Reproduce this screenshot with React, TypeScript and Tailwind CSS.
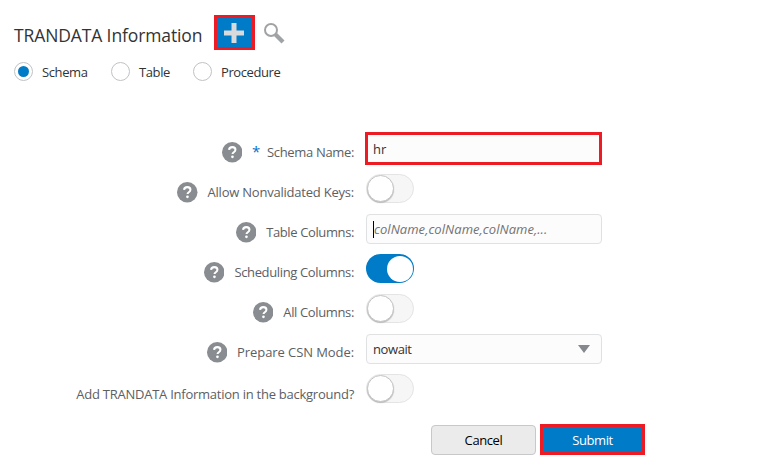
import type { ReactNode } from "react";

function Help() {
  return (
    <svg width="20.5" height="20.5" viewBox="0 0 20 20" className="shrink-0">
      <circle cx="10" cy="10" r="10" fill="#898d91" />
      <path d="M6.9 7.7C7 5.9 8.2 5 10.1 5c1.8 0 3 .9 3 2.5 0 1.3-.7 1.9-1.6 2.5-.9.6-1.2 1-1.2 1.8" fill="none" stroke="#fff" strokeWidth="2" />
      <circle cx="10.2" cy="14.5" r="1.3" fill="#fff" />
    </svg>
  );
}

function Toggle({ on = false }: { on?: boolean }) {
  return on ? (
    <div className="flex h-[29px] w-12 items-center justify-end rounded-full bg-[#007bc8] pr-px">
      <div className="size-[26px] rounded-full bg-white" />
    </div>
  ) : (
    <div className="flex h-[29px] w-12 items-center rounded-full border border-[#e4e4e4] bg-[#f6f6f6]">
      <div className="size-[27px] rounded-full border border-[#c4c4c4] bg-white shadow-[0_1px_1px_#bbb]" />
    </div>
  );
}

function Row({ label, labelClass, help = true, required = false, children }: { label: string; labelClass: string; help?: boolean; required?: boolean; children: ReactNode }) {
  return (
    <div className="flex h-10">
      <div className="flex h-[37px] w-[354px] items-center justify-end text-[#5c6064]">
        {help && <Help />}
        {required && <span className="ml-[10px] w-2 pb-1 text-[15px] leading-4 text-[#0572ce]">*</span>}
        <span className={`whitespace-nowrap ${required ? "ml-[7px]" : "ml-[10px]"} ${labelClass}`}>{label}</span>
      </div>
      <div className="ml-3">{children}</div>
    </div>
  );
}

function Radio({ label, checked = false }: { label: string; checked?: boolean }) {
  return (
    <div className="flex items-center gap-2">
      <div className="flex size-[19px] items-center justify-center rounded-full border border-[#bfc2c4] bg-white">
        {checked && <div className="size-[11px] rounded-full bg-[#007bc8]" />}
      </div>
      <span className="pl-px pt-px tracking-[-0.4px] text-[#333]">{label}</span>
    </div>
  );
}

export default function App() {
  return (
    <div className="h-[470px] w-[773px] overflow-hidden bg-white font-['Open_Sans',sans-serif] text-[13px] leading-4 text-[#333]">
      <div className="flex h-[50px] pl-[14px] pt-[15px]">
        <h1 className="w-[200px] whitespace-nowrap pt-2 text-[17.5px] font-normal leading-6 tracking-[-0.12px]">TRANDATA Information</h1>
        <button className="flex h-[35px] w-[41px] shrink-0 items-center justify-center border-3 border-[#ed1c24] bg-[#007bc8]">
          <svg width="20" height="20" viewBox="0 0 20 20" className="-ml-0.5"><path d="M10 0v20M0 10h20" stroke="#d9dadb" strokeWidth="5" /></svg>
        </button>
        <svg width="22" height="22" viewBox="0 0 22 22" className="ml-2 mt-2 shrink-0">
          <circle cx="8" cy="7" r="6" fill="none" stroke="#a0a3a6" strokeWidth="2" />
          <path d="m12.5 11.5 7.5 7.5" stroke="#a0a3a6" strokeWidth="4.2" />
        </svg>
      </div>
      <div className="flex h-[84px] items-start pl-[14px] pt-3">
        <div className="w-[97px]"><Radio label="Schema" checked /></div>
        <div className="w-[82px]"><Radio label="Table" /></div>
        <Radio label="Procedure" />
      </div>
      <Row label="Schema Name:" labelClass="pb-0.5 tracking-[-0.34px]" required>
        <div className="-ml-px -mt-0.5 flex h-[33px] w-[237px] items-center border-3 border-[#ed1c24] bg-[#fcfcfc] pl-[5px]">hr</div>
      </Row>
      <Row label="Allow Nonvalidated Keys:" labelClass="pb-0.5 tracking-[-0.22px]"><Toggle /></Row>
      <Row label="Table Columns:" labelClass="pb-0.5 tracking-[-0.38px]">
        <div className="flex h-[30px] w-[236px] items-center rounded-sm border border-[#dfe1e2] bg-[#fcfcfc] pl-1.5">
          <div className="h-[17px] w-px bg-black" />
          <span className="italic tracking-[0.05px] text-[#737373]">colName,colName,colName,...</span>
        </div>
      </Row>
      <Row label="Scheduling Columns:" labelClass="pb-0.5 tracking-[-0.36px]"><Toggle on /></Row>
      <Row label="All Columns:" labelClass="pb-0.5 tracking-[-0.36px]"><Toggle /></Row>
      <Row label="Prepare CSN Mode:" labelClass="pb-0.5 tracking-[-0.08px]">
        <div className="flex h-[30px] w-[236px] items-center justify-between rounded-sm border border-[#dfe1e2] bg-[#fcfcfc] pl-1.5 pr-[11px]">
          <span className="tracking-[-0.4px]">nowait</span>
          <svg width="12" height="8" viewBox="0 0 12 8"><path d="M0 0h12L6 8z" fill="#85898d" /></svg>
        </div>
      </Row>
      <Row label="Add TRANDATA Information in the background?" labelClass="pt-[3px] tracking-[-0.25px]" help={false}><Toggle /></Row>
      <div className="flex gap-1 pl-[431px] pt-[10px]">
        <button className="mt-px h-[30px] w-[105px] rounded-sm border border-[#c6c8ca] bg-[#ebebeb] tracking-[-0.4px] text-black">Cancel</button>
        <button className="h-[31px] w-[105px] border-3 border-[#ed1c24] bg-[#007bc8] tracking-[-0.4px] text-white">Submit</button>
      </div>
    </div>
  );
}
